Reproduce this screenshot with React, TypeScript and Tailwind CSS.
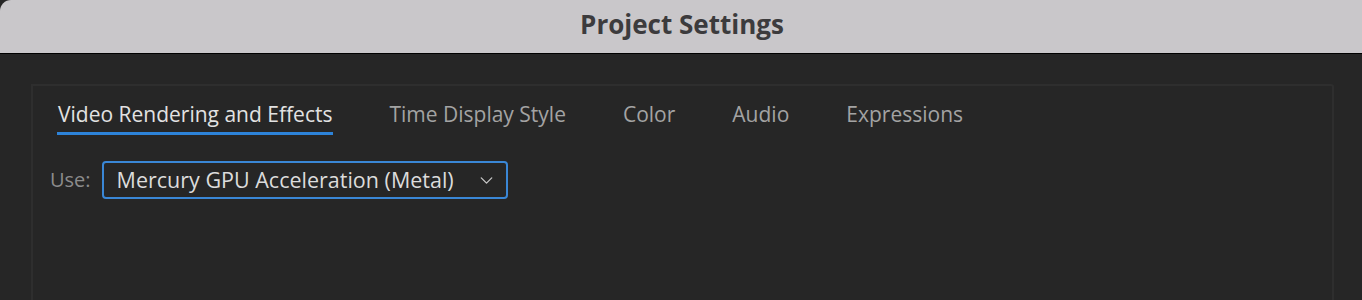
import { ChevronDown } from 'lucide-react'

const TABS = ['Video Rendering and Effects', 'Time Display Style', 'Color', 'Audio', 'Expressions']

function TitleBar() {
  return (
    <div className="h-[54px] bg-[#262626]">
      <div className="h-[54px] rounded-tl-[11px] bg-[#c9c7ca] border-b border-black flex items-center justify-center pb-[4px]">
        <span className="font-['Open_Sans',sans-serif] font-bold text-[26px] text-[#3c3b3d] pl-[2px]">
          Project Settings
        </span>
      </div>
    </div>
  )
}

function Tabs() {
  return (
    <div className="flex gap-[55px] pl-[24px]">
      {TABS.map((t, i) => (
        <div key={t} className="flex flex-col">
          <span
            className={
              i === 0
                ? 'text-[21px] leading-[28px] px-[1px] text-[#e2e2e2]'
                : 'text-[21px] leading-[28px] px-[1px] text-[#a3a3a3]'
            }
          >
            {t}
          </span>
          <div className={i === 0 ? 'mt-[4px] h-[3px] bg-[#2d83d9]' : 'mt-[4px] h-[3px]'} />
        </div>
      ))}
    </div>
  )
}

export default function App() {
  return (
    <div className="w-[1362px] h-[300px] overflow-hidden bg-[#262626] font-['Open_Sans',sans-serif]">
      <TitleBar />
      <div className="pl-[31px] pr-[28px] pt-[30px]">
        <div className="h-[260px] border-2 border-[#2e2e2e] rounded-tr-[3px] pt-[14px]">
          <Tabs />
          <div className="mt-[26px] pl-[17px] flex items-center gap-[11px]">
            <span className="text-[20px] text-[#8c8c8c]">Use:</span>
            <div className="w-[406px] h-[38px] border-2 border-[#3a87d6] rounded-[4px] flex items-center justify-between pl-[13px] pr-[9px]">
              <span className="text-[21.5px] text-[#dcdcdc]">Mercury GPU Acceleration (Metal)</span>
              <ChevronDown size={21} strokeWidth={1.5} className="text-[#c8c8c8]" />
            </div>
          </div>
        </div>
      </div>
    </div>
  )
}
